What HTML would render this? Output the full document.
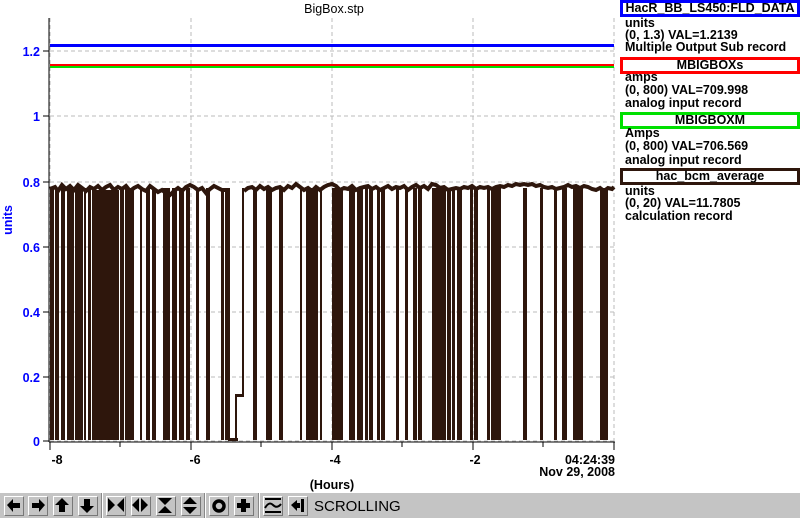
<!DOCTYPE html>
<html><head><meta charset="utf-8"><style>
body{margin:0;width:800px;height:517px;background:#fff;overflow:hidden;position:relative;font-family:"Liberation Sans",sans-serif;}
.t{position:absolute;font-size:12.5px;font-weight:bold;white-space:nowrap;line-height:13px;color:#000}
.box{position:absolute;left:620px;width:174px;height:11px;border:3px solid;font-size:12.5px;font-weight:bold;line-height:11px;text-align:center}
.tb{position:absolute;left:0;top:492px;width:800px;height:25px;background:#c4c4c4;border-top:1px solid #fff}
.btn{position:absolute;top:3px;width:18px;height:18px;background:#c4c4c4;border:1px solid #fff;border-right-color:#777;border-bottom-color:#777}
.sep{position:absolute;top:0;width:1px;height:25px;background:#888;border-right:1px solid #fff}
</style></head><body>
<svg width="800" height="517" style="position:absolute;left:0;top:0" font-family="Liberation Sans" font-weight="bold" font-size="12.5">
<g stroke="#bbb" stroke-dasharray="4,3" stroke-width="1">
<line x1="50" y1="51" x2="614" y2="51"/><line x1="50" y1="116" x2="614" y2="116"/><line x1="50" y1="182" x2="614" y2="182"/><line x1="50" y1="247" x2="614" y2="247"/><line x1="50" y1="312" x2="614" y2="312"/><line x1="50" y1="377" x2="614" y2="377"/><line x1="50" y1="441" x2="614" y2="441"/>
<line x1="50" y1="18" x2="50" y2="441"/><line x1="191" y1="18" x2="191" y2="441"/><line x1="332" y1="18" x2="332" y2="441"/><line x1="473" y1="18" x2="473" y2="441"/><line x1="614" y1="18" x2="614" y2="441"/>
</g>
<line x1="49" y1="18" x2="49" y2="442" stroke="#000"/>
<line x1="49" y1="442" x2="615" y2="442" stroke="#000"/>
<g stroke="#000"><line x1="43" y1="51" x2="49" y2="51"/><line x1="43" y1="116" x2="49" y2="116"/><line x1="43" y1="182" x2="49" y2="182"/><line x1="43" y1="247" x2="49" y2="247"/><line x1="43" y1="312" x2="49" y2="312"/><line x1="43" y1="377" x2="49" y2="377"/><line x1="43" y1="441" x2="49" y2="441"/>
<line x1="50" y1="442" x2="50" y2="450"/><line x1="120" y1="442" x2="120" y2="447"/><line x1="191" y1="442" x2="191" y2="450"/><line x1="261" y1="442" x2="261" y2="447"/><line x1="332" y1="442" x2="332" y2="450"/><line x1="402" y1="442" x2="402" y2="447"/><line x1="473" y1="442" x2="473" y2="450"/><line x1="543" y1="442" x2="543" y2="447"/><line x1="614" y1="442" x2="614" y2="450"/></g>
<rect x="50" y="44" width="564" height="3" fill="#0000ff"/>
<rect x="50" y="64" width="564" height="2" fill="#ff0000"/>
<rect x="50" y="66" width="564" height="2" fill="#00e000"/>
<g fill="#2e160c">
<rect x="50" y="188" width="4" height="252"/><rect x="55" y="188" width="4" height="252"/><rect x="61" y="188" width="4" height="252"/><rect x="67" y="188" width="7" height="252"/><rect x="75" y="188" width="8" height="252"/><rect x="84" y="188" width="2" height="252"/><rect x="88" y="188" width="3" height="252"/><rect x="92" y="190" width="16" height="250"/><rect x="108" y="190" width="11" height="250"/><rect x="120" y="188" width="4" height="252"/><rect x="125" y="188" width="4" height="252"/><rect x="129" y="188" width="5" height="252"/><rect x="140" y="188" width="2" height="252"/><rect x="146" y="188" width="4" height="252"/><rect x="152" y="188" width="4" height="252"/><rect x="163" y="188" width="7" height="252"/><rect x="172" y="188" width="5" height="252"/><rect x="179" y="188" width="5" height="252"/><rect x="186" y="188" width="4" height="252"/><rect x="196" y="188" width="3" height="252"/><rect x="206" y="188" width="4" height="252"/><rect x="221" y="188" width="3" height="252"/><rect x="225" y="188" width="5" height="252"/><rect x="235" y="395" width="2" height="45"/><rect x="235" y="394" width="9" height="3"/><rect x="242" y="188" width="2" height="208"/><rect x="228" y="438" width="10" height="3"/><rect x="253" y="188" width="4" height="252"/><rect x="266" y="188" width="6" height="252"/><rect x="279" y="188" width="4" height="252"/><rect x="300" y="188" width="2" height="252"/><rect x="306" y="188" width="12" height="252"/><rect x="320" y="188" width="2" height="252"/>
<rect x="332" y="188" width="11" height="252"/><rect x="349" y="188" width="6" height="252"/><rect x="357" y="188" width="6" height="252"/><rect x="365" y="188" width="3" height="252"/><rect x="369" y="188" width="4" height="252"/><rect x="377" y="188" width="3" height="252"/><rect x="381" y="188" width="4" height="252"/><rect x="396" y="188" width="3" height="252"/><rect x="405" y="188" width="3" height="252"/><rect x="413" y="188" width="4" height="252"/><rect x="418" y="188" width="4" height="252"/><rect x="432" y="188" width="10" height="252"/><rect x="442" y="188" width="4" height="252"/><rect x="447" y="188" width="4" height="252"/><rect x="452" y="188" width="3" height="252"/><rect x="457" y="188" width="5" height="252"/><rect x="470" y="188" width="3" height="252"/><rect x="474" y="188" width="4" height="252"/><rect x="487" y="188" width="3" height="252"/><rect x="491" y="188" width="10" height="252"/><rect x="523" y="188" width="4" height="252"/><rect x="540" y="188" width="3" height="252"/><rect x="554" y="188" width="3" height="252"/><rect x="562" y="188" width="5" height="252"/><rect x="573" y="188" width="10" height="252"/><rect x="600" y="188" width="8" height="252"/>
</g>
<polyline fill="none" stroke="#2e160c" stroke-width="4" points="50,189 55,187 58,191 62,185 66,189 70,186 74,190 78,185 82,188 86,191 90,187 94,189 98,186 102,190 106,187 110,185 114,190 118,187 122,189 126,186 130,191 134,188 138,186 142,189 146,191 150,186 154,189 158,192 162,190 166,193 170,195 174,191 178,188 182,191 186,187 190,185 194,187 198,190 202,188 206,193 210,189 214,186 218,188 222,190 227,190"/>
<polyline fill="none" stroke="#2e160c" stroke-width="4" points="244,191 248,188 252,187 256,190 260,186 264,189 268,187 272,190 276,188 280,187 284,190 288,186 292,188 296,184 300,187 304,190 308,188 312,191 316,187 320,190 324,187 328,185 332,184 336,186 340,190 344,188 348,189 352,186 356,190 360,188 364,187 368,186 372,189 376,187 380,190 384,188 388,186 392,189 396,187 400,188 404,186 408,190 412,187 416,185 420,188 424,186 428,189 432,184 436,185 440,188 444,187 448,190 452,189 456,188 460,189 464,187 468,188 472,186 476,189 480,187 484,188 488,187 492,189 496,187 500,186 504,187 508,185 512,186 516,184 520,185 524,184 528,185 532,184 536,186 540,185 544,187 548,188 552,187 556,189 560,188 564,187 568,185 572,187 576,186 580,188 584,186 588,187 592,189 596,190 600,188 604,191 608,188 612,189 614,187"/>
<text x="40" y="56" fill="#0000ff" text-anchor="end">1.2</text>
<text x="40" y="121" fill="#0000ff" text-anchor="end">1</text>
<text x="40" y="187" fill="#0000ff" text-anchor="end">0.8</text>
<text x="40" y="252" fill="#0000ff" text-anchor="end">0.6</text>
<text x="40" y="317" fill="#0000ff" text-anchor="end">0.4</text>
<text x="40" y="382" fill="#0000ff" text-anchor="end">0.2</text>
<text x="40" y="446" fill="#0000ff" text-anchor="end">0</text>
<text transform="translate(12,220) rotate(-90)" fill="#0000ff" text-anchor="middle">units</text>
<text x="57" y="464" text-anchor="middle">-8</text>
<text x="195" y="464" text-anchor="middle">-6</text>
<text x="335" y="464" text-anchor="middle">-4</text>
<text x="475" y="464" text-anchor="middle">-2</text>
<text x="615" y="464" text-anchor="end">04:24:39</text>
<text x="615" y="476" text-anchor="end">Nov 29, 2008</text>
<text x="332" y="489" text-anchor="middle">(Hours)</text>
<text x="334" y="13" text-anchor="middle" font-weight="normal">BigBox.stp</text>
</svg>
<div class="box" style="top:0;border-color:#0000ff">HacR_BB_LS450:FLD_DATA</div>
<div class="t" style="left:625px;top:17px">units</div>
<div class="t" style="left:625px;top:29px">(0, 1.3) VAL=1.2139</div>
<div class="t" style="left:625px;top:41px">Multiple Output Sub record</div>
<div class="box" style="top:57px;border-color:#ff0000">MBIGBOXs</div>
<div class="t" style="left:625px;top:71px">amps</div>
<div class="t" style="left:625px;top:84px">(0, 800) VAL=709.998</div>
<div class="t" style="left:625px;top:97px">analog input record</div>
<div class="box" style="top:112px;border-color:#00e000">MBIGBOXM</div>
<div class="t" style="left:625px;top:127px">Amps</div>
<div class="t" style="left:625px;top:140px">(0, 800) VAL=706.569</div>
<div class="t" style="left:625px;top:154px">analog input record</div>
<div class="box" style="top:168px;border-color:#2e160c">hac_bcm_average</div>
<div class="t" style="left:625px;top:185px">units</div>
<div class="t" style="left:625px;top:197px">(0, 20) VAL=11.7805</div>
<div class="t" style="left:625px;top:210px">calculation record</div>
<div class="tb">
<div class="btn" style="left:4px"></div><div class="btn" style="left:28px"></div><div class="btn" style="left:53px"></div><div class="btn" style="left:78px"></div>
<div class="sep" style="left:101px"></div>
<div class="btn" style="left:106px"></div><div class="btn" style="left:131px"></div><div class="btn" style="left:156px"></div><div class="btn" style="left:181px"></div>
<div class="sep" style="left:204px"></div>
<div class="btn" style="left:209px"></div><div class="btn" style="left:234px"></div>
<div class="sep" style="left:258px"></div>
<div class="btn" style="left:263px"></div><div class="btn" style="left:288px"></div>
<svg width="500" height="25" style="position:absolute;left:0;top:0">
<g fill="#000">
<path d="M7,12 L13,6 L13,10 L20,10 L20,15 L13,15 L13,19Z"/>
<path d="M45,12 L39,6 L39,10 L32,10 L32,15 L39,15 L39,19Z"/>
<path d="M62,5 L69,12 L65,12 L65,19 L59,19 L59,12 L55,12Z"/>
<path d="M87,20 L94,13 L90,13 L90,6 L84,6 L84,13 L80,13Z"/>
<path d="M108,5 L115,12 L108,19Z M124,5 L117,12 L124,19Z"/>
<path d="M139,5 L132,12 L139,19Z M141,5 L148,12 L141,19Z"/>
<path d="M158,5 L172,5 L165,12Z M158,20 L172,20 L165,13Z"/>
<path d="M190,4 L197,11 L183,11Z M190,21 L197,14 L183,14Z"/>
<circle cx="219" cy="13" r="5" fill="none" stroke="#000" stroke-width="3.5"/>
<path d="M241,6 L246,6 L246,10 L250,10 L250,15 L246,15 L246,19 L241,19 L241,15 L237,15 L237,10 L241,10Z"/>
<rect x="265" y="5" width="16" height="2"/><rect x="265" y="18" width="16" height="2"/>
<path d="M265,15 Q269,8 273,12 T281,11" fill="none" stroke="#000" stroke-width="2"/>
<path d="M291,12 L297,7 L297,10 L300,10 L300,15 L297,15 L297,18Z"/><rect x="301" y="6" width="3" height="13"/>
</g>
<text x="314" y="18" font-family="Liberation Sans" font-size="15" fill="#000">SCROLLING</text>
</svg>
</div>
</body></html>
